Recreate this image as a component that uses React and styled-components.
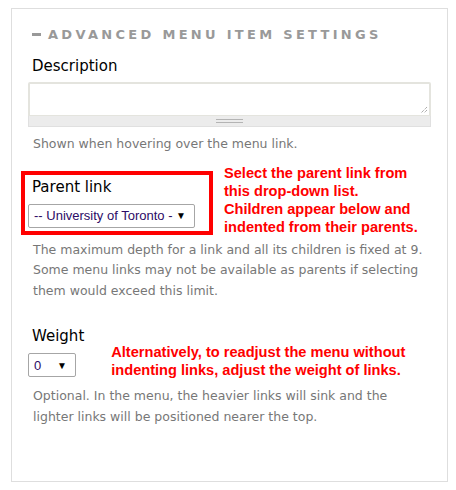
import React from "react";
import styled, { createGlobalStyle } from "styled-components";

const GlobalStyle = createGlobalStyle`
	body {
		margin: 0;
		background: #fff;
		font-family: "DejaVu Sans", sans-serif;
	}
`;

const Panel = styled.div`
	box-sizing: border-box;
	margin: 8px 0 0 11px;
	width: 437px;
	height: 474px;
	border: 1px solid #dedede;
	padding: 18px 15px 0 16px;
`;

const Legend = styled.div`
	display: flex;
	align-items: center;
	gap: 7px;
	padding-left: 4px;
	height: 15px;
	color: #999;
	font-family: "DejaVu Sans", sans-serif;
	font-weight: bold;
	font-size: 13px;
	letter-spacing: 3.3px;
	white-space: nowrap;
`;

const Dash = styled.span`
	display: block;
	width: 9px;
	height: 3px;
	background: #999;
`;

const Label = styled.div`
	font-size: 15px;
	color: #000;
	padding-left: 4px;
	margin-top: ${(p) => p.$top || 0}px;
	line-height: 20px;
`;

const TextArea = styled.div`
	margin-top: 6px;
	width: 403px;
`;

const Area = styled.div`
	box-sizing: border-box;
	height: 34px;
	border: 2px solid #e4e4de;
	border-bottom: 1px solid #e4e4de;
	border-radius: 2px 2px 0 0;
	background: #fff;
	position: relative;
`;

const Resize = styled.svg`
	position: absolute;
	right: 1px;
	bottom: 1px;
`;

const Grip = styled.div`
	box-sizing: border-box;
	height: 11px;
	background: #ececec;
	border: 1px solid #e0e0e0;
	border-top: none;
	display: flex;
	justify-content: center;
	align-items: center;
	&::after {
		content: "";
		width: 27px;
		height: 4px;
		border-top: 1px solid #b4b4b4;
		border-bottom: 1px solid #b4b4b4;
		box-sizing: border-box;
	}
`;

const Help = styled.div`
	color: #777;
	font-size: 12.5px;
	line-height: 20.5px;
	padding-left: 5px;
	margin-top: ${(p) => p.$top || 0}px;
	white-space: nowrap;
`;

const Row = styled.div`
	display: flex;
	align-items: flex-start;
	margin-top: ${(p) => p.$top || 0}px;
`;

const Boxed = styled.div`
	box-sizing: border-box;
	width: 192px;
	height: 64px;
	margin-left: -7px;
	border: 4px solid #f00;
	padding: 2px 0 0 3px;
`;

const Field = styled.div``;

const Select = styled.div`
	box-sizing: border-box;
	display: flex;
	align-items: center;
	justify-content: space-between;
	width: ${(p) => p.$w}px;
	height: 24px;
	margin-top: ${(p) => p.$top || 0}px;
	border: 1px solid #a6a6a6;
	border-radius: 2px;
	padding: 0 8px 0 5px;
	font-family: "Liberation Sans", Arial, sans-serif;
	font-size: 13px;
	color: #2c0b66;
	background: #fff;
	white-space: nowrap;
`;

const Arrow = styled.span`
	color: #000;
	font-size: 10px;
`;

const Note = styled.div`
	color: #f00;
	font-family: "Liberation Sans", Arial, sans-serif;
	font-weight: bold;
	font-size: 14.6px;
	line-height: 18px;
	margin-left: ${(p) => p.$left}px;
	margin-top: ${(p) => p.$top || 0}px;
	white-space: nowrap;
`;

export default function App() {
	return (
		<>
			<GlobalStyle />
			<Panel>
				<Legend>
					<Dash />
					ADVANCED MENU ITEM SETTINGS
				</Legend>
				<Label $top={14}>Description</Label>
				<TextArea>
					<Area>
						<Resize width="8" height="8" viewBox="0 0 8 8">
							<path d="M7 1 L1 7 M7 4 L4 7" stroke="#888" strokeWidth="1" strokeDasharray="1 1" />
						</Resize>
					</Area>
					<Grip />
				</TextArea>
				<Help $top={7}>Shown when hovering over the menu link.</Help>
				<Row $top={16}>
					<Boxed>
						<Label>Parent link</Label>
						<Select $w={167} $top={7}>
							-- University of Toronto -
							<Arrow>▼</Arrow>
						</Select>
					</Boxed>
					<Note $left={11} $top={-7}>
						Select the parent link from
						<br />
						this drop-down list.
						<br />
						Children appear below and
						<br />
						indented from their parents.
					</Note>
				</Row>
				<Help $top={4}>
					The maximum depth for a link and all its children is fixed at 9.
					<br />
					Some menu links may not be available as parents if selecting
					<br />
					them would exceed this limit.
				</Help>
				<Row $top={25}>
					<Field>
						<Label>Weight</Label>
						<Select $w={48} $top={7}>
							0
							<Arrow>▼</Arrow>
						</Select>
					</Field>
					<Note $left={27} $top={17}>
						Alternatively, to readjust the menu without
						<br />
						indenting links, adjust the weight of links.
					</Note>
				</Row>
				<Help $top={7}>
					Optional. In the menu, the heavier links will sink and the
					<br />
					lighter links will be positioned nearer the top.
				</Help>
			</Panel>
		</>
	);
}
